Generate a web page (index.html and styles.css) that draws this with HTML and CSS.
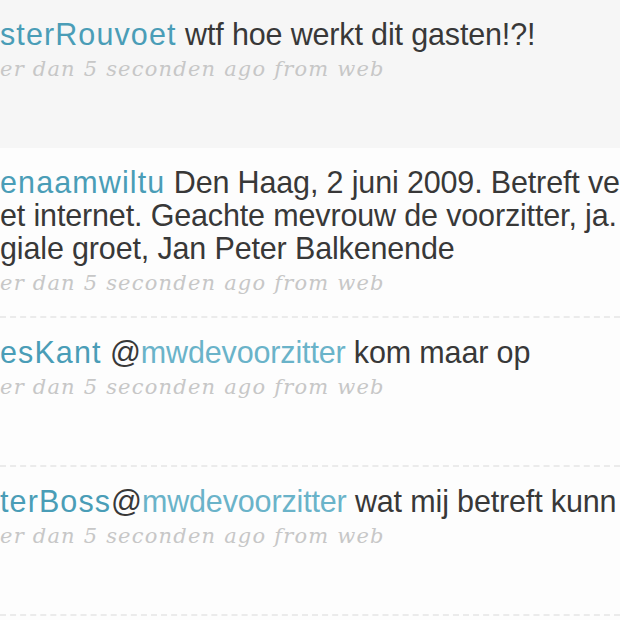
FILE: index.html
```html
<!DOCTYPE html>
<html lang="nl">
<head>
<meta charset="utf-8">
<title>Tijdlijn</title>
<link rel="stylesheet" href="styles.css">
</head>
<body>
<div class="viewport">
  <ol class="timeline">
    <li class="status status-latest">
      <div class="status-body">
        <p class="entry"><a class="screen-name">sterRouvoet</a> <span class="entry-content">wtf hoe werkt dit gasten!?!</span></p>
        <p class="meta">er dan 5 seconden ago from web</p>
      </div>
    </li>
    <li class="status">
      <div class="status-body">
        <p class="entry"><a class="screen-name">enaamwiltu</a> <span class="entry-content">Den Haag, 2 juni 2009. Betreft ve<br>et internet. Geachte mevrouw de voorzitter, ja.<br>giale groet, Jan Peter Balkenende</span></p>
        <p class="meta">er dan 5 seconden ago from web</p>
      </div>
    </li>
    <li class="status">
      <div class="status-body">
        <p class="entry"><a class="screen-name">esKant</a> <span class="entry-content">@<a class="mention">mwdevoorzitter</a> kom maar op</span></p>
        <p class="meta">er dan 5 seconden ago from web</p>
      </div>
    </li>
    <li class="status">
      <div class="status-body">
        <p class="entry"><a class="screen-name">terBoss</a><span class="entry-content">@<a class="mention">mwdevoorzitter</a> wat mij betreft kunn</span></p>
        <p class="meta">er dan 5 seconden ago from web</p>
      </div>
    </li>
  </ol>
</div>
</body>
</html>
```

FILE: styles.css
```css
html, body {
  margin: 0;
  padding: 0;
  background: #fdfdfd;
}

.viewport {
  width: 620px;
  height: 620px;
  overflow: hidden;
}

.timeline {
  list-style: none;
  margin: 0;
  padding: 0;
}

.status {
  padding: 18px 0 21px;
  min-height: 108px;
  border-bottom: 2px dashed #ebebeb;
  background: #fdfdfd;
}

.status-latest {
  background: #f6f6f6;
  border-bottom: 0;
  padding-bottom: 22px;
}

.status-body {
  display: flex;
  flex-direction: column;
}

.entry {
  margin: 0;
  font-family: "Liberation Sans", Arial, sans-serif;
  font-size: 30.5px;
  line-height: 33px;
  color: #383838;
  white-space: nowrap;
}

.entry-content {
  letter-spacing: -0.15px;
}

.screen-name {
  color: #4a9db7;
  letter-spacing: 1.1px;
}

.mention {
  color: #6ab3c9;
}

.meta {
  margin: 6px 0 0;
  font-family: "DejaVu Serif", Georgia, serif;
  font-style: italic;
  font-size: 21px;
  line-height: 24px;
  letter-spacing: 1.2px;
  color: #c7c7c7;
  white-space: nowrap;
}
```
